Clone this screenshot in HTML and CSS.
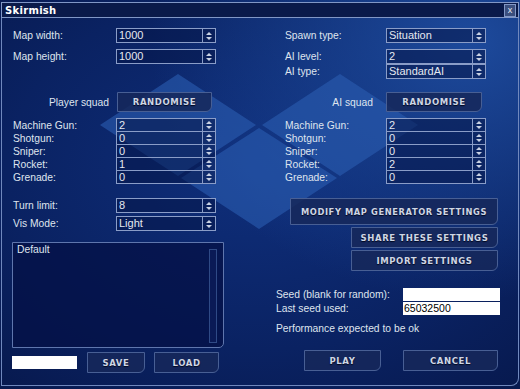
FILE: index.html
```html
<!DOCTYPE html>
<html lang="en">
<head>
    <meta charset="UTF-8">
    <title>Skirmish</title>
    <link rel="stylesheet" href="styles.css">
</head>
<body>
    <div class="window">
        <!-- diamonds behind the form -->
        <svg class="backdrop" width="520" height="389" viewBox="0 0 520 389">
            <polygon points="178,74 256,125 178,176 100,125" />
            <polygon points="340,74 418,125 340,176 262,125" />
            <polygon points="259,128 337,178 259,229 181,178" />
        </svg>

        <div class="titlebar">
            <span class="title">Skirmish</span>
            <span class="close">x</span>
        </div>

        <div class="panel">
            <div class="col left">
                <div class="row">
                    <span class="lbl">Map width:</span>
                    <div class="spin"><span class="val">1000</span><span class="arrows"></span></div>
                </div>
                <div class="row gap6">
                    <span class="lbl">Map height:</span>
                    <div class="spin"><span class="val">1000</span><span class="arrows"></span></div>
                </div>

                <div class="row squad squad-left">
                    <span class="lbl right-al">Player squad</span>
                    <button class="btn randomise">RANDOMISE</button>
                </div>

                <div class="weapons">
                    <div class="row w"><span class="lbl">Machine Gun:</span><div class="spin"><span class="val">2</span><span class="arrows"></span></div></div>
                    <div class="row w"><span class="lbl">Shotgun:</span><div class="spin"><span class="val">0</span><span class="arrows"></span></div></div>
                    <div class="row w"><span class="lbl">Sniper:</span><div class="spin"><span class="val">0</span><span class="arrows"></span></div></div>
                    <div class="row w"><span class="lbl">Rocket:</span><div class="spin"><span class="val">1</span><span class="arrows"></span></div></div>
                    <div class="row w"><span class="lbl">Grenade:</span><div class="spin"><span class="val">0</span><span class="arrows"></span></div></div>
                </div>

                <div class="row turn">
                    <span class="lbl">Turn limit:</span>
                    <div class="spin"><span class="val">8</span><span class="arrows"></span></div>
                </div>
                <div class="row gap3">
                    <span class="lbl">Vis Mode:</span>
                    <div class="spin"><span class="val">Light</span><span class="arrows"></span></div>
                </div>

                <div class="listbox">
                    <div class="item">Default</div>
                    <div class="scroll"></div>
                </div>

                <div class="saverow">
                    <div class="whitebox name"></div>
                    <button class="btn save">SAVE</button>
                    <button class="btn load">LOAD</button>
                </div>
            </div>

            <div class="col right">
                <div class="row">
                    <span class="lbl">Spawn type:</span>
                    <div class="spin"><span class="val">Situation</span><span class="arrows"></span></div>
                </div>
                <div class="row gap6">
                    <span class="lbl">AI level:</span>
                    <div class="spin"><span class="val">2</span><span class="arrows"></span></div>
                </div>
                <div class="row">
                    <span class="lbl">AI type:</span>
                    <div class="spin"><span class="val">StandardAI</span><span class="arrows"></span></div>
                </div>

                <div class="row squad squad-right">
                    <span class="lbl right-al">AI squad</span>
                    <button class="btn randomise ai">RANDOMISE</button>
                </div>

                <div class="weapons">
                    <div class="row w"><span class="lbl">Machine Gun:</span><div class="spin"><span class="val">2</span><span class="arrows"></span></div></div>
                    <div class="row w"><span class="lbl">Shotgun:</span><div class="spin"><span class="val">0</span><span class="arrows"></span></div></div>
                    <div class="row w"><span class="lbl">Sniper:</span><div class="spin"><span class="val">0</span><span class="arrows"></span></div></div>
                    <div class="row w"><span class="lbl">Rocket:</span><div class="spin"><span class="val">2</span><span class="arrows"></span></div></div>
                    <div class="row w"><span class="lbl">Grenade:</span><div class="spin"><span class="val">0</span><span class="arrows"></span></div></div>
                </div>

                <button class="btn modify">MODIFY MAP GENERATOR SETTINGS</button>
                <button class="btn share">SHARE THESE SETTINGS</button>
                <button class="btn import">IMPORT SETTINGS</button>

                <div class="seedrow first">
                    <span class="seedlbl">Seed (blank for random):</span>
                    <div class="whitebox seed"></div>
                </div>
                <div class="seedrow">
                    <span class="seedlbl">Last seed used:</span>
                    <div class="whitebox seed">65032500</div>
                </div>

                <div class="perf">Performance expected to be ok</div>

                <div class="playrow">
                    <button class="btn play">PLAY</button>
                    <button class="btn cancel">CANCEL</button>
                </div>
            </div>
        </div>
    </div>
</body>
</html>
```

FILE: styles.css
```css
body {
    margin: 0;
    background: #081a4f;
    font-family: "Liberation Sans", Arial, sans-serif;
    font-size: 10.3px;
    color: #dfe4ee;
}
.window {
    position: relative;
    width: 520px;
    height: 389px;
    overflow: hidden;
    background:
        radial-gradient(ellipse 320px 260px at 470px 40px, #1d4a9c 0%, rgba(20,60,140,0) 100%),
        radial-gradient(ellipse 420px 300px at 260px 170px, #0f2f7c 0%, #0a2262 60%, #07184c 100%);
}
.backdrop {
    position: absolute;
    left: 0;
    top: 0;
}
.backdrop polygon {
    fill: #2a5cb0;
    opacity: 0.62;
}

/* title bar */
.titlebar {
    position: relative;
    margin: 2px 1px 0 1px;
    height: 14px;
    border: 1px solid #8197c6;
    background: #0a1a4a;
    display: flex;
    align-items: center;
    justify-content: space-between;
}
.title {
    font-family: "DejaVu Sans", sans-serif;
    font-weight: bold;
    font-size: 10px;
    color: #ffffff;
    margin-left: 3px;
    letter-spacing: 0.3px;
}
.close {
    width: 10px;
    height: 11px;
    margin-right: 2px;
    border: 1px solid #8197c6;
    background: #3b4f7e;
    color: #e8ecf4;
    font-size: 9px;
    line-height: 10px;
    text-align: center;
}

/* main panel */
.panel {
    position: relative;
    margin: 0 1px;
    height: 368px;
    border: 1px solid #7088bd;
    border-top: none;
    border-bottom-right-radius: 8px;
    display: flex;
    padding: 10px 0 0 10px;
    box-sizing: border-box;
}
.col {
    display: flex;
    flex-direction: column;
}
.left {
    width: 212px;
}
.right {
    width: 225px;
    margin-left: 51px;
}
.row {
    display: flex;
    align-items: center;
    height: 15px;
}
.left .lbl {
    width: 104px;
    padding-left: 1px;
    box-sizing: border-box;
}
.right .lbl {
    width: 111px;
    padding-left: 10px;
    box-sizing: border-box;
}
.right-al {
    text-align: right;
}
.left .right-al {
    padding-right: 7px;
}
.right .right-al {
    padding-right: 13px;
}
.gap6 {
    margin-top: 6px;
}
.gap3 {
    margin-top: 3px;
}

/* spin boxes */
.spin {
    width: 100px;
    height: 15px;
    box-sizing: border-box;
    border: 1px solid #8a9dc8;
    background: rgba(6, 22, 72, 0.55);
    display: flex;
}
.val {
    flex: 1;
    padding-left: 2px;
    font-size: 11px;
    line-height: 13px;
    color: #e4e8f0;
}
.arrows {
    width: 12px;
    border-left: 1px solid #8a9dc8;
    display: flex;
    flex-direction: column;
    align-items: center;
    justify-content: center;
    gap: 2px;
}
.arrows::before,
.arrows::after {
    content: "";
    width: 0;
    height: 0;
    border-left: 3px solid transparent;
    border-right: 3px solid transparent;
}
.arrows::before {
    border-bottom: 3px solid #c9d2e4;
}
.arrows::after {
    border-top: 3px solid #c9d2e4;
}

/* squad + weapons */
.squad {
    height: 20px;
    margin-top: 28px;
}
.right .squad {
    margin-top: 13px;
}
.weapons {
    margin-top: 6px;
}
.w {
    height: 14px;
}
.w + .w {
    margin-top: -1px;
}
.w .spin {
    height: 14px;
}
.w .val {
    line-height: 12px;
}
.turn {
    margin-top: 14px;
}

/* buttons */
.btn {
    font-family: "DejaVu Sans", sans-serif;
    font-weight: bold;
    font-size: 8.5px;
    letter-spacing: 0.6px;
    color: #cfd6e4;
    text-shadow: 0 1px 1px #00081f;
    background: rgba(22, 40, 90, 0.85);
    border: 1px solid #485f94;
    border-radius: 0 0 6px 0;
    padding: 0;
    box-sizing: border-box;
    cursor: pointer;
}
.randomise {
    width: 95px;
    height: 20px;
    margin-left: 1px;
}
.randomise.ai {
    width: 96px;
    margin-left: 0;
}
.modify {
    width: 208px;
    height: 27px;
    margin: 14px 0 0 15px;
    font-size: 8.3px;
}
.share,
.import {
    width: 147px;
    height: 21px;
    margin: 2px 0 0 76px;
}

/* list box */
.listbox {
    position: relative;
    margin-top: 11px;
    width: 212px;
    height: 106px;
    box-sizing: border-box;
    border: 1px solid #5f76ad;
    border-bottom-right-radius: 5px;
    background: rgba(4, 16, 70, 0.75);
}
.item {
    padding: 1px 0 0 4px;
}
.scroll {
    position: absolute;
    right: 6px;
    top: 6px;
    width: 8px;
    height: 94px;
    box-sizing: border-box;
    border: 1px solid #2f4a86;
    background: #0a1a56;
}
.saverow {
    display: flex;
    align-items: center;
    margin-top: 4px;
    height: 21px;
}
.whitebox {
    background: #ffffff;
    color: #000;
    height: 13px;
    line-height: 13px;
    font-size: 10.5px;
    box-sizing: border-box;
}
.name {
    width: 65px;
}
.save {
    width: 58px;
    height: 21px;
    margin-left: 10px;
}
.load {
    width: 65px;
    height: 21px;
    margin-left: 9px;
}

/* seed area */
.seedrow {
    display: flex;
    align-items: center;
    margin-top: 1px;
    height: 13px;
}
.seedrow.first {
    margin-top: 17px;
}
.seedlbl {
    width: 128px;
    padding-left: 1px;
    box-sizing: border-box;
}
.seed {
    width: 97px;
    padding-left: 1px;
}
.perf {
    margin-top: 7px;
    padding-left: 1px;
    line-height: 14px;
}
.playrow {
    display: flex;
    margin-top: 14px;
}
.play {
    width: 77px;
    height: 21px;
    margin-left: 29px;
}
.cancel {
    width: 95px;
    height: 21px;
    margin-left: 22px;
}
```
